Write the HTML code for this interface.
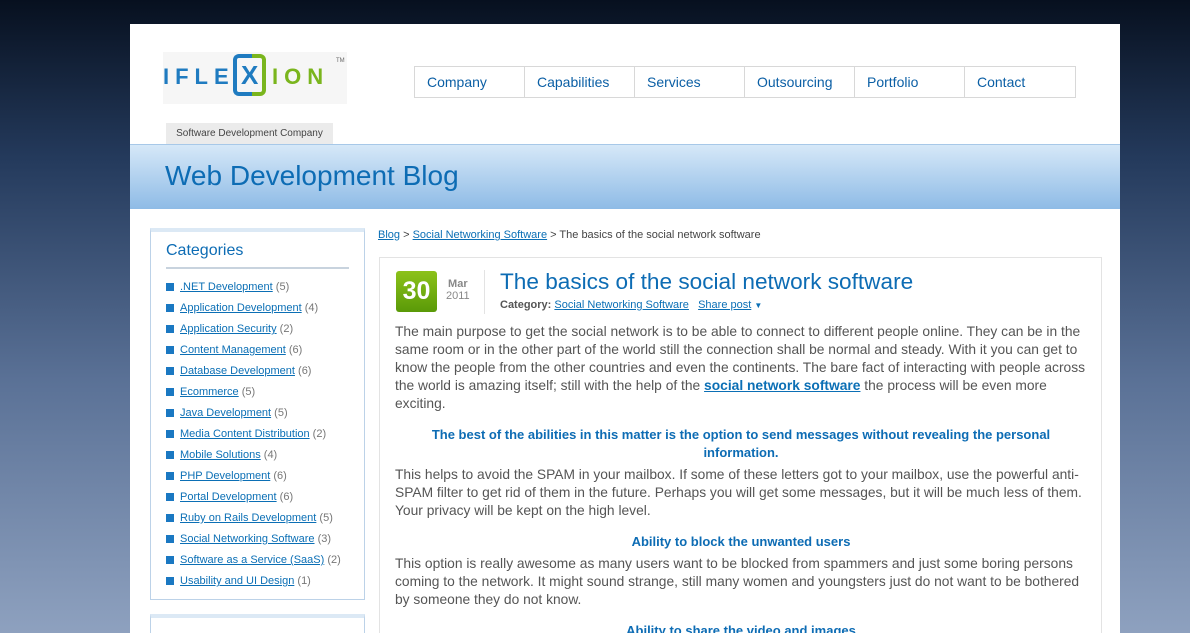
<!DOCTYPE html><html><head><style>
html,body{margin:0;width:1190px;height:633px;overflow:hidden}
body{background:linear-gradient(#07101f 0%,#243a5c 25%,#5a7196 60%,#8ea1bf 100%);font-family:"Liberation Sans",Arial,sans-serif;position:relative}
#page{position:absolute;left:130px;top:24px;width:990px;height:609px;background:#fff;overflow:hidden}
a{color:#0b6fb5;text-decoration:underline}
.nav{position:absolute;left:284px;top:42px;height:30px;border:1px solid #d8d8d8;display:flex;}
.nav div{width:110px;border-right:1px solid #d8d8d8;font-size:14px;color:#0b5fa5;line-height:30px;padding-left:12px;box-sizing:border-box;}
.nav div:last-child{border-right:none}
.tag{position:absolute;left:36px;top:99px;width:167px;height:21px;background:#ebebeb;font-size:10px;color:#444;line-height:21px;text-align:center}
.banner{position:absolute;left:0;top:120px;width:990px;height:64px;background:linear-gradient(#d6e8f8,#8ebbe6);border-top:1px solid #a7c8e8}
.banner span{position:absolute;left:35px;top:15px;font-size:28px;color:#0d6cb4;}
.side{position:absolute;left:20px;top:204px;width:215px;height:372px;border:1px solid #bcd2e8;border-top:4px solid #dce9f5;box-sizing:border-box}
.side h3{margin:10px 0 0 15px;font-weight:normal;font-size:16px;color:#0d6cb4;padding-bottom:7px;border-bottom:2px solid #c8d3de;width:183px}
.side ul{list-style:none;margin:9px 0 0 15px;padding:0;font-size:11px;color:#777}
.side li{height:21px;line-height:18px}
.side li:before{content:"";display:inline-block;width:8px;height:8px;background:#1a78c2;margin-right:6px;vertical-align:-1px}
.side2{position:absolute;left:20px;top:590px;width:215px;height:60px;border:1px solid #bcd2e8;border-top:4px solid #dce9f5;box-sizing:border-box}
.crumb{position:absolute;left:248px;top:205px;font-size:11px;color:#444}
.post{position:absolute;left:249px;top:233px;width:721px;height:420px;border:1px solid #e3e3e3}
.date{position:absolute;left:16px;top:13px;width:41px;height:41px;background:linear-gradient(#8cc21a,#5a9a08);border-radius:3px;color:#fff;font-weight:bold;font-size:25px;text-align:center;line-height:41px}
.mon{position:absolute;left:66px;top:20px;font-size:11px;color:#888;text-align:center}
.ttl{position:absolute;left:120px;top:11px;font-size:22.6px;color:#0d6cb4}
.cat{position:absolute;left:120px;top:41px;font-size:11px;color:#555}
.txt{position:absolute;left:15px;top:65px;width:692px;font-size:13.8px;line-height:18px;color:#555}
.txt p{margin:0 0 13px}
.txt h4{margin:0 0 4px;text-align:center;font-size:13px;color:#0d6cb4;line-height:18px}
</style></head><body><div id="page">
<div style="position:absolute;left:33px;top:28px;width:184px;height:52px;background:#f6f6f6"></div>
<div style="position:absolute;left:33px;top:40px;font-size:22px;font-weight:bold;letter-spacing:6px;color:#1f7bc0">IFLE</div>
<div style="position:absolute;left:103px;top:30px;width:22px;height:42px;border:4px solid #1f7bc0;border-right:none;border-radius:6px 0 0 6px;box-sizing:border-box"></div>
<div style="position:absolute;left:122px;top:30px;width:14px;height:42px;border:4px solid #7ab51d;border-left:none;border-radius:0 6px 6px 0;box-sizing:border-box"></div>
<div style="position:absolute;left:111px;top:36px;font-size:26px;font-weight:bold;color:#1f7bc0">X</div>
<div style="position:absolute;left:142px;top:40px;font-size:22px;font-weight:bold;letter-spacing:6px;color:#7ab51d">ION</div>
<div style="position:absolute;left:206px;top:34px;font-size:6px;color:#666">TM</div>
<div class="nav"><div>Company</div><div>Capabilities</div><div>Services</div><div>Outsourcing</div><div>Portfolio</div><div>Contact</div></div>
<div class="tag">Software Development Company</div>
<div class="banner"><span>Web Development Blog</span></div>
<div class="side"><h3>Categories</h3><ul>
<li><a>.NET Development</a> (5)</li><li><a>Application Development</a> (4)</li><li><a>Application Security</a> (2)</li><li><a>Content Management</a> (6)</li><li><a>Database Development</a> (6)</li><li><a>Ecommerce</a> (5)</li><li><a>Java Development</a> (5)</li><li><a>Media Content Distribution</a> (2)</li><li><a>Mobile Solutions</a> (4)</li><li><a>PHP Development</a> (6)</li><li><a>Portal Development</a> (6)</li><li><a>Ruby on Rails Development</a> (5)</li><li><a>Social Networking Software</a> (3)</li><li><a>Software as a Service (SaaS)</a> (2)</li><li><a>Usability and UI Design</a> (1)</li></ul></div>
<div class="side2"></div>
<div class="crumb"><a>Blog</a> &gt; <a>Social Networking Software</a> &gt; The basics of the social network software</div>
<div class="post">
<div class="date">30</div><div class="mon"><b>Mar</b><br>2011</div>
<div style="position:absolute;left:104px;top:12px;width:1px;height:44px;background:#e3e3e3"></div>
<div class="ttl">The basics of the social network software</div>
<div class="cat"><b>Category:</b> <a>Social Networking Software</a> &nbsp; <a>Share post</a> <span style="color:#0b6fb5;font-size:8px">▼</span></div>
<div class="txt">
<p>The main purpose to get the social network is to be able to connect to different people online. They can be in the same room or in the other part of the world still the connection shall be normal and steady. With it you can get to know the people from the other countries and even the continents. The bare fact of interacting with people across the world is amazing itself; still with the help of the <a style="font-weight:bold">social network software</a> the process will be even more exciting.</p>
<h4>The best of the abilities in this matter is the option to send messages without revealing the personal information.</h4>
<p>This helps to avoid the SPAM in your mailbox. If some of these letters got to your mailbox, use the powerful anti-SPAM filter to get rid of them in the future. Perhaps you will get some messages, but it will be much less of them. Your privacy will be kept on the high level.</p>
<h4>Ability to block the unwanted users</h4>
<p>This option is really awesome as many users want to be blocked from spammers and just some boring persons coming to the network. It might sound strange, still many women and youngsters just do not want to be bothered by someone they do not know.</p>
<h4>Ability to share the video and images</h4>
</div></div>
</div></body></html>
